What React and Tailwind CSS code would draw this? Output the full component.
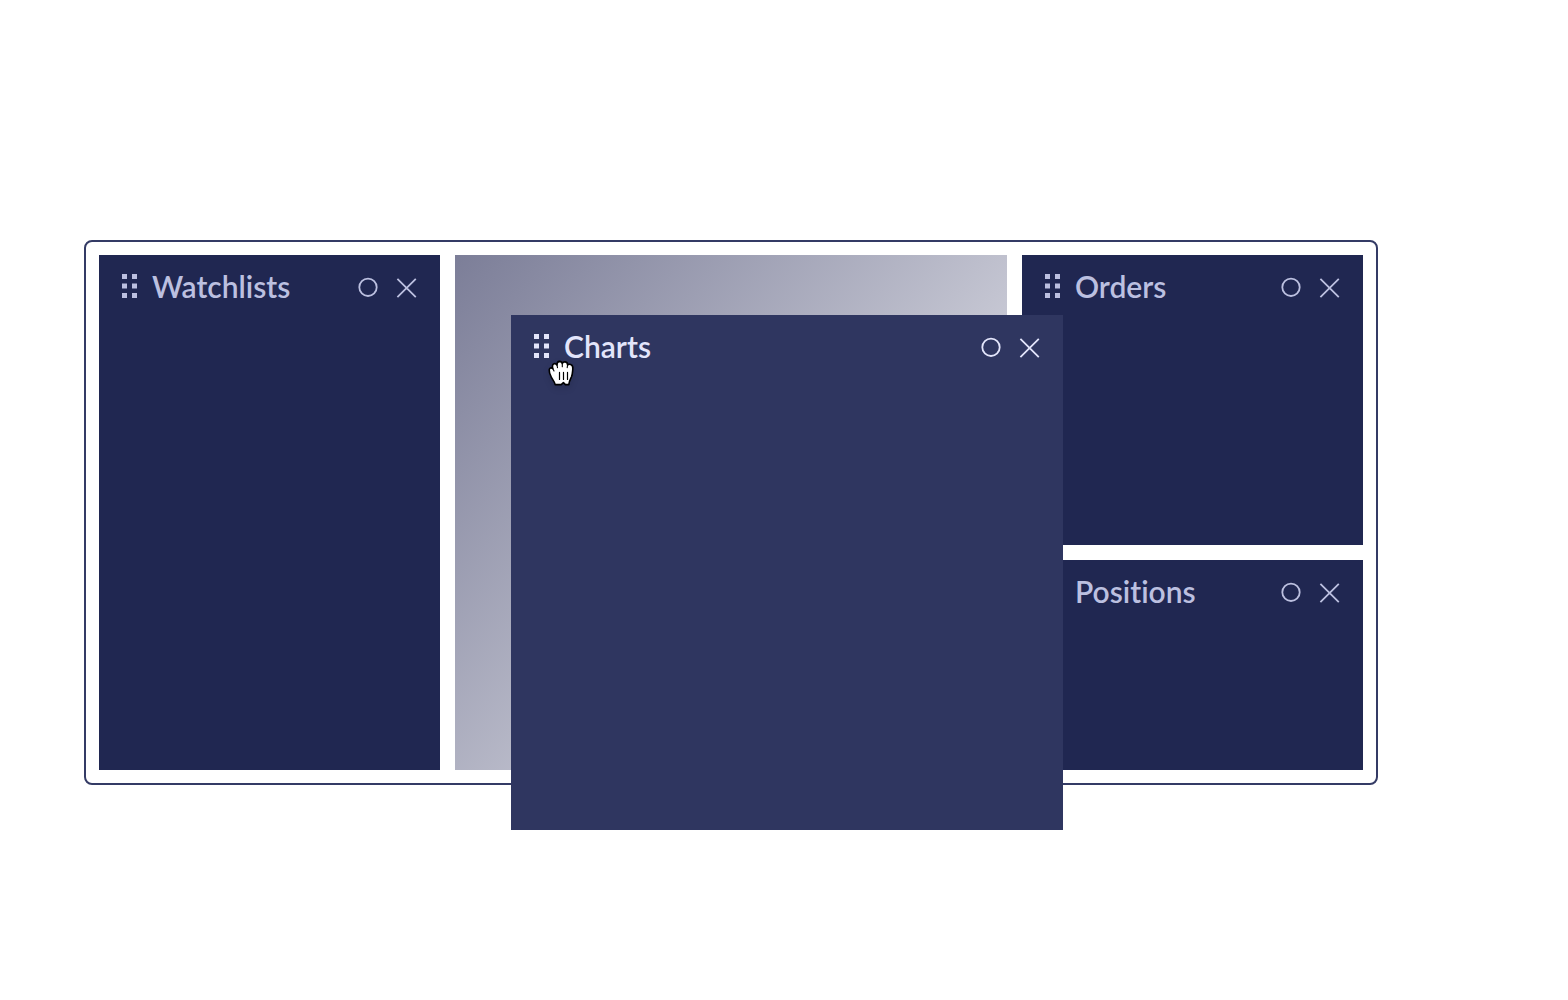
import React from 'react';
import clsx from 'clsx';

const DOTS = [
    [0, 0], [10, 0],
    [0, 9.5], [10, 9.5],
    [0, 19], [10, 19],
];

function GripIcon() {
    return (
        <svg width="15" height="24" viewBox="0 0 15 24" fill="currentColor" aria-hidden="true">
            {DOTS.map(([x, y]) => (
                <rect key={`${x}-${y}`} x={x} y={y} width="5" height="5" />
            ))}
        </svg>
    );
}

function CircleIcon() {
    return (
        <svg width="20" height="20" viewBox="0 0 20 20" fill="none" stroke="currentColor" strokeWidth="1.8" aria-hidden="true">
            <circle cx="10" cy="10.3" r="8.7" />
        </svg>
    );
}

function CloseIcon() {
    return (
        <svg width="20" height="20" viewBox="0 0 20 20" fill="none" stroke="currentColor" strokeWidth="1.8" className="overflow-visible" aria-hidden="true">
            <path d="M0.4 1.8 L18.8 20.2 M18.8 1.8 L0.4 20.2" />
        </svg>
    );
}

function GrabCursor() {
    return (
        <svg className="absolute left-[37px] top-[45px] drop-shadow-md" width="27" height="28" viewBox="0 0 27 28" aria-hidden="true">
            <path
                d="M7.2 24.6 C7 22.4 5 20.2 3.4 17.4 C2.2 15.2 1 12 1.2 9.8 C1.5 7.8 3.3 7.4 4.8 8.6 C4.2 6.2 4.4 4.2 6 3.7 C7.4 3.3 8.4 4 9 5 C8.9 3 9.8 1.5 11.6 1.4 C13.2 1.4 14 2.4 14.3 3.6 C14.8 2.2 15.8 1.6 17.3 1.9 C18.9 2.2 19.7 3.4 19.6 5 C20.6 4.2 22 4 23.2 4.7 C24.7 5.5 25 7 24.8 9 C24.5 12.2 24.6 14.3 23.4 17 C22.2 19.5 21 21.6 20.8 24.6 L17.4 24.6 L15.4 22.6 L13.2 24.6 Z"
                fill="white"
                stroke="black"
                strokeWidth="1.6"
                strokeLinejoin="round"
            />
            <path d="M9 5 L9.5 7.6 M14.3 3.6 V6.8 M19.6 5 L19.2 7.6 M4.8 8.6 L6 11" fill="none" stroke="black" strokeWidth="1.1" strokeLinecap="round" />
            <path d="M11.5 12.4 V19.4 M15.5 12.4 V19.4 M19.5 12.4 V19.4" fill="none" stroke="black" strokeWidth="1.2" strokeLinecap="round" />
        </svg>
    );
}

function Panel({ title, active, className, children }) {
    return (
        <section className={clsx(active ? 'bg-[#2f3660] text-[#e3e5fb]' : 'bg-[#202751] text-[#bcc0e0]', className)}>
            <header className="flex h-[62px] items-center px-[23px]">
                <button type="button" aria-label={`Move ${title}`} className="mr-[15px] cursor-grab">
                    <GripIcon />
                </button>
                <h2 className="text-3xl leading-8 font-semibold [font-variant-ligatures:none]">{title}</h2>
                <div className="ml-auto flex items-center gap-[19px] pt-0.5">
                    <button type="button" aria-label={`Maximize ${title}`}>
                        <CircleIcon />
                    </button>
                    <button type="button" aria-label={`Close ${title}`}>
                        <CloseIcon />
                    </button>
                </div>
            </header>
            {children}
        </section>
    );
}

function App() {
    return (
        <main className="min-h-screen bg-white pt-60 pr-[190px] pb-40 pl-[84px] font-['Lato',sans-serif]">
            <div className="grid grid-cols-[341fr_552fr_341fr] gap-[15px] rounded-lg border-2 border-[#343b65] p-[13px]">
                <Panel title="Watchlists" />

                {/* Empty slot left behind by the panel being dragged */}
                <div className="relative bg-linear-130 from-[#7c7e98] to-[#f8f8fa]">
                    <Panel title="Charts" active className="absolute top-15 left-14 z-10 h-full w-full">
                        <GrabCursor />
                    </Panel>
                </div>

                <div className="flex flex-col gap-[15px]">
                    <Panel title="Orders" className="min-h-[290px]" />
                    <Panel title="Positions" className="min-h-[210px]" />
                </div>
            </div>
        </main>
    );
}

export default App;
